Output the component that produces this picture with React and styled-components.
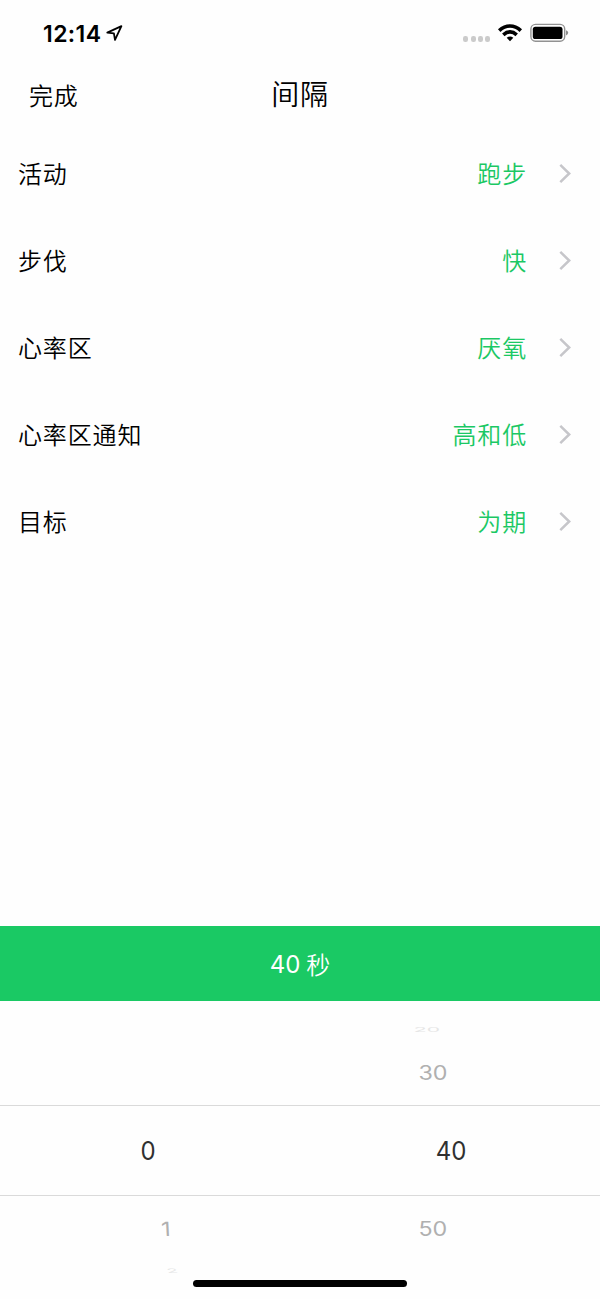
import styled, { createGlobalStyle } from "styled-components"

const GlobalStyle = createGlobalStyle`
    * {
        box-sizing: border-box;
    }
    body {
        margin: 0;
        background: #fefefe;
        font-family: Inter, "Noto Sans CJK SC", sans-serif;
    }
`
const Screen = styled.main`
    display: flex;
    flex-direction: column;
    width: 600px;
    height: 1299px;
    overflow: hidden;
    color: #000;
`
const StatusBar = styled.div`
    display: flex;
    align-items: center;
    justify-content: space-between;
    height: 66px;
    padding: 0 31px 0 43px;
`
const Clock = styled.div`
    display: flex;
    align-items: center;
    gap: 5px;
    padding-top: 1px;
    font-size: 23px;
    font-weight: 600;
    letter-spacing: 0.4px;
`
const Indicators = styled.div`
    display: flex;
    align-items: center;
    gap: 7px;
`
const Dots = styled.div`
    display: flex;
    gap: 2.2px;
    padding-top: 12px;
`
const Dot = styled.i`
    width: 5px;
    height: 5.4px;
    border-radius: 2.2px;
    background: #cbcbcb;
`
const Header = styled.header`
    display: grid;
    grid-template-columns: 1fr auto 1fr;
    align-items: center;
    height: 64px;
    padding: 0 29px;
`
const Done = styled.span`
    padding-bottom: 2px;
    font-size: 24px;
    font-weight: 350;
    line-height: 36px;
    letter-spacing: 0.7px;
`
const Title = styled.h1`
    margin: 0;
    padding-bottom: 6px;
    font-size: 28px;
    font-weight: 350;
    line-height: 40px;
    letter-spacing: 0.8px;
`
const List = styled.ul`
    flex: 1;
    margin: 0;
    padding: 0;
    list-style: none;
`
const Row = styled.li`
    display: flex;
    align-items: center;
    height: 87px;
    padding: 0 29px 0 18px;
    font-size: 24px;
    font-weight: 350;
    letter-spacing: 0.85px;
`
const Label = styled.span`
    padding-bottom: 3px;
`
const Value = styled.span`
    margin-left: auto;
    margin-right: 31px;
    padding-bottom: 3px;
    color: #1bc864;
`
const Total = styled.div`
    display: flex;
    align-items: center;
    justify-content: center;
    height: 75px;
    background: #1ac964;
    color: #fff;
    font-size: 24px;
    letter-spacing: -0.1px;
`
const Amount = styled.span`
    padding-top: 2px;
`
const Unit = styled.span`
    margin-left: 6px;
    font-weight: 350;
`
const Picker = styled.section`
    height: 298px;
    padding-top: 15px;
`
const PickerRow = styled.div`
    display: grid;
    grid-template-columns: 1fr 1fr;
    align-items: center;
    height: ${(p) => p.$height}px;
    margin-top: ${(p) => p.$gap || 0}px;
    border: solid #dadada;
    border-width: ${(p) => (p.$selected ? "1.5px 0" : "0")};
`
const Digit = styled.span`
    justify-self: center;
    color: ${(p) => p.$color};
    font-size: 24px;
    line-height: 26px;
    letter-spacing: 0;
    transform: translate(${(p) => p.$shift}px, ${(p) => p.$drop || 0}px) skewX(${(p) => p.$skew || 0}deg) scale(${(p) => p.$stretch});
`
const HomeBar = styled.div`
    width: 214px;
    height: 7px;
    margin: 0 auto;
    border-radius: 4px;
    background: #000;
`

const rows = [
    { label: "活动", value: "跑步" },
    { label: "步伐", value: "快" },
    { label: "心率区", value: "厌氧" },
    { label: "心率区通知", value: "高和低" },
    { label: "目标", value: "为期" },
]

// the wheel gets flatter and lighter away from the selected row
const wheel = [
    { height: 26, right: { text: "20", color: "#e6e6e6", shift: -23, drop: 1, stretch: "0.88, 0.28" } },
    { height: 60, right: { text: "30", color: "#b0b0b0", shift: -17, drop: 1, stretch: "0.97, 0.82" } },
    {
        height: 91, gap: 3, selected: true,
        left: { text: "0", color: "#303030", shift: -2, drop: 1, stretch: "1, 1.05" },
        right: { text: "40", color: "#303030", shift: 1, drop: 1, stretch: "1, 1.05" },
    },
    {
        height: 64,
        left: { text: "1", color: "#b0b0b0", shift: 16, drop: 1, stretch: "0.97, 0.82", skew: 3 },
        right: { text: "50", color: "#b0b0b0", shift: -17, drop: 1, stretch: "0.97, 0.82" },
    },
    { height: 20, left: { text: "2", color: "#e8e8e8", shift: 22, drop: -2, stretch: "0.75, 0.25", skew: 20 } },
]

const LocationIcon = () => (
    <svg width="17" height="18" viewBox="0 0 17 18">
        <path d="M1.3 7.6 L15.4 1.1 L9 14.9 L7.9 8.4 Z" fill="none" stroke="#000" strokeWidth="1.8" strokeLinejoin="round" />
    </svg>
)

const WifiIcon = () => (
    <svg width="26" height="20" viewBox="0 0 26 20">
        <g fill="none" stroke="#000" strokeWidth="3.6">
            <path d="M2.2 7.6 Q7.2 3 13 3 Q18.8 3 23.8 7.6" />
            <path d="M6.3 11.8 Q9.5 8.9 13 8.9 Q16.5 8.9 19.7 11.8" />
        </g>
        <path d="M9.7 14.8 Q13 12.4 16.3 14.8 L13 18.2 Z" />
    </svg>
)

const BatteryIcon = () => (
    <svg width="39" height="20" viewBox="0 0 39 20">
        <rect x="0.9" y="1.4" width="33.8" height="16.8" rx="4.6" fill="none" stroke="#929292" strokeWidth="1.4" />
        <rect x="2.8" y="3.7" width="29.7" height="12.3" rx="2.6" />
        <path d="M36 7.2 Q38.2 7.9 38.2 9.8 Q38.2 11.7 36 12.4 Z" fill="#8d8d8d" />
    </svg>
)

const Chevron = () => (
    <svg width="13" height="20" viewBox="0 0 13 20">
        <path d="M2.3 0.9 L11.2 9.5 L2.3 18.1" fill="none" stroke="#c6c6ca" strokeWidth="2.5" />
    </svg>
)

const WheelDigit = ({ item }) => {
    if (!item) return <span />
    return (
        <Digit $color={item.color} $shift={item.shift} $drop={item.drop} $stretch={item.stretch} $skew={item.skew}>
            {item.text}
        </Digit>
    )
}

const App = () => {
    return (
        <>
            <GlobalStyle />
            <Screen>
                <StatusBar>
                    <Clock>12:14<LocationIcon /></Clock>
                    <Indicators>
                        <Dots><Dot /><Dot /><Dot /><Dot /></Dots>
                        <WifiIcon />
                        <BatteryIcon />
                    </Indicators>
                </StatusBar>
                <Header>
                    <Done>完成</Done>
                    <Title>间隔</Title>
                </Header>
                <List>
                    {rows.map((row) => (
                        <Row key={row.label}>
                            <Label>{row.label}</Label>
                            <Value>{row.value}</Value>
                            <Chevron />
                        </Row>
                    ))}
                </List>
                <Total>
                    <Amount>40</Amount>
                    <Unit>秒</Unit>
                </Total>
                <Picker>
                    {wheel.map((line, i) => (
                        <PickerRow key={i} $height={line.height} $gap={line.gap} $selected={line.selected}>
                            <WheelDigit item={line.left} />
                            <WheelDigit item={line.right} />
                        </PickerRow>
                    ))}
                    <HomeBar />
                </Picker>
            </Screen>
        </>
    )
}
export default App
